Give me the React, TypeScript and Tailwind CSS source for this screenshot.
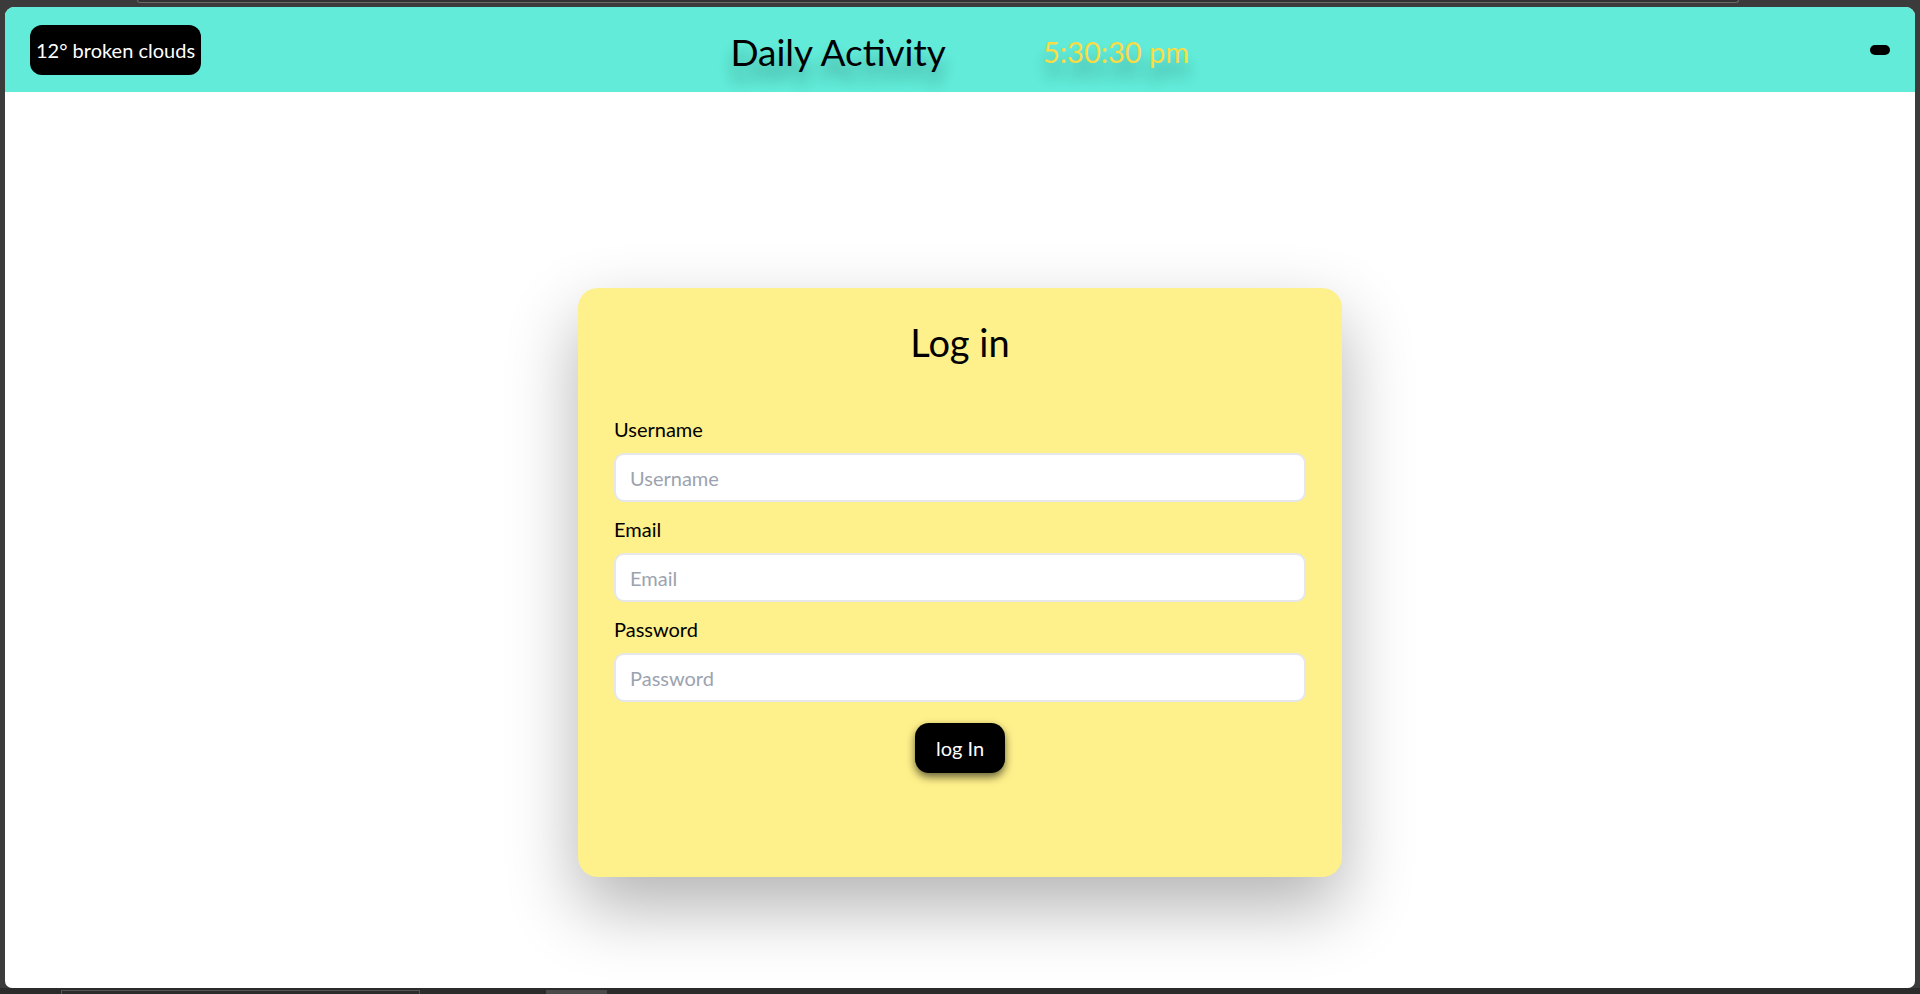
import React from "react";

const font = { fontFamily: '"Segoe UI", Lato, "Noto Sans", sans-serif' };

function Field({ label, placeholder, type }: { label: string; placeholder: string; type: string }) {
  return (
    <div className="flex flex-col">
      <label className="text-[20px] leading-[24px] text-black">{label}</label>
      <input
        type={type}
        placeholder={placeholder}
        className="mt-[12px] h-[49px] w-full rounded-[10px] border-2 border-[#e5e7eb] bg-white px-[14px] text-[20px] text-black outline-none placeholder:text-[#9ca3af]"
      />
    </div>
  );
}

export default function App() {
  return (
    <div className="flex h-[994px] w-full flex-col bg-[#3b3b3b]" style={font}>
      {/* frame top */}
      <div className="h-[7px] shrink-0">
        <div className="ml-[137px] h-[3px] w-[1602px] rounded-b-md border-x border-b border-[#6a6a6a] bg-[#333]" />
      </div>

      <div className="mx-[5px] flex flex-1 flex-col overflow-hidden rounded-t-[9px] rounded-b-[7px] bg-white">
        <header className="flex h-[85px] shrink-0 items-center bg-[#61ebd8] px-[25px]">
          <div className="flex h-[50px] items-center rounded-[12px] bg-black px-[6px] text-[20px] text-white">
            12° broken clouds
          </div>
          <div className="ml-[510px] flex w-[254px] justify-center pt-[3px]">
            <h1 className="text-[37px] leading-none text-black [text-shadow:0_14px_14px_rgba(0,0,0,0.3)]">
              Daily Activity
            </h1>
          </div>
          <div className="ml-[64px] flex w-[174px] justify-center pt-[4px]">
            <span className="text-[29px] leading-none text-[#fadb44] [text-shadow:0_14px_14px_rgba(0,0,0,0.3)]">
              5:30:30 pm
            </span>
          </div>
          <button className="ml-auto h-[10px] w-[20px] rounded-full bg-black" />
        </header>

        <main className="flex flex-1 justify-center pt-[196px]">
          <div className="flex h-[589px] w-[764px] flex-col rounded-[20px] bg-[#fef08a] px-[36px] pt-[30px] shadow-[0_30px_70px_rgba(0,0,0,0.3)]">
            <h2 className="text-center text-[38px] leading-[48px] text-black">Log in</h2>
            <form className="mt-[51px] flex flex-col gap-[15px]">
              <Field label="Username" placeholder="Username" type="text" />
              <Field label="Email" placeholder="Email" type="email" />
              <Field label="Password" placeholder="Password" type="password" />
            </form>
            <div className="mt-[21px] flex justify-center">
              <button className="h-[50px] w-[90px] rounded-[14px] bg-black text-[20px] text-white shadow-[0_4px_8px_rgba(0,0,0,0.6)]">
                log In
              </button>
            </div>
          </div>
        </main>
      </div>

      {/* frame bottom */}
      <div className="flex h-[6px] shrink-0 bg-[#2b2b2b]">
        <div className="ml-[61px] mt-[2px] h-[4px] w-[359px] border-x border-t border-[#555]" />
        <div className="ml-[126px] mt-[2px] h-[4px] w-[61px] bg-[#4a4a4a]" />
      </div>
    </div>
  );
}
